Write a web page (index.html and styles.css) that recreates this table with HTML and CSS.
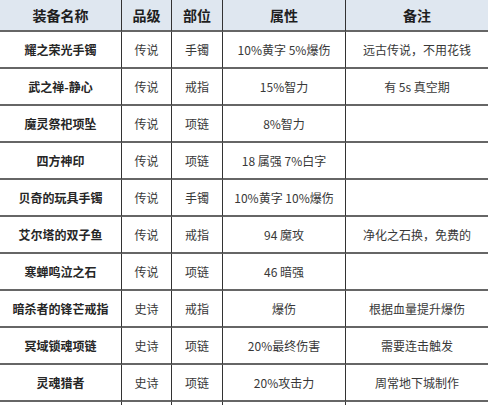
FILE: index.html
```html
<!DOCTYPE html>
<html lang="zh">
<head>
<meta charset="utf-8">
<link rel="stylesheet" href="styles.css">
</head>
<body>
<table class="gear">
  <colgroup>
    <col class="c-name"><col class="c-grade"><col class="c-slot"><col class="c-attr"><col class="c-note">
  </colgroup>
  <thead>
    <tr><th>装备名称</th><th>品级</th><th>部位</th><th>属性</th><th>备注</th></tr>
  </thead>
  <tbody>
    <tr><td class="name">耀之荣光手镯</td><td>传说</td><td>手镯</td><td>10%黄字 5%爆伤</td><td>远古传说，不用花钱</td></tr>
    <tr><td class="name">武之禅-静心</td><td>传说</td><td>戒指</td><td>15%智力</td><td>有 5s 真空期</td></tr>
    <tr><td class="name">魔灵祭祀项坠</td><td>传说</td><td>项链</td><td>8%智力</td><td></td></tr>
    <tr><td class="name">四方神印</td><td>传说</td><td>项链</td><td>18 属强 7%白字</td><td></td></tr>
    <tr><td class="name">贝奇的玩具手镯</td><td>传说</td><td>手镯</td><td>10%黄字 10%爆伤</td><td></td></tr>
    <tr><td class="name">艾尔塔的双子鱼</td><td>传说</td><td>戒指</td><td>94 魔攻</td><td>净化之石换，免费的</td></tr>
    <tr><td class="name">寒蝉鸣泣之石</td><td>传说</td><td>项链</td><td>46 暗强</td><td></td></tr>
    <tr><td class="name">暗杀者的锋芒戒指</td><td>史诗</td><td>戒指</td><td>爆伤</td><td>根据血量提升爆伤</td></tr>
    <tr><td class="name">冥域锁魂项链</td><td>史诗</td><td>项链</td><td>20%最终伤害</td><td>需要连击触发</td></tr>
    <tr><td class="name">灵魂猎者</td><td>史诗</td><td>项链</td><td>20%攻击力</td><td>周常地下城制作</td></tr>
    <tr class="next"><td></td><td></td><td></td><td></td><td></td></tr>
  </tbody>
</table>
</body>
</html>
```

FILE: styles.css
```css
html, body {
  margin: 0;
  padding: 0;
  background: #ffffff;
}
body {
  width: 488px;
  height: 405px;
  overflow: hidden;
  font-family: "Noto Sans CJK SC", "Noto Sans", sans-serif;
}
.gear {
  border-collapse: separate;
  border-spacing: 0;
  table-layout: fixed;
  width: 488px;
}
.c-name { width: 121px; }
.c-grade { width: 50px; }
.c-slot { width: 51px; }
.c-attr { width: 123px; }
.c-note { width: 143px; }

.gear th,
.gear td {
  box-sizing: content-box;
  padding: 0;
  text-align: center;
  vertical-align: middle;
  border-left: 1px solid #333333;
  border-bottom: 2px solid #666666;
  white-space: nowrap;
  overflow: hidden;
}
.gear th:first-child,
.gear td:first-child {
  border-left: none;
}
.gear th {
  height: 30px;
  background: #dfe7f0;
  font-size: 14px;
  font-weight: bold;
  color: #1e1e1e;
}
.gear td {
  height: 35px;
  font-size: 12px;
  color: #383838;
}
.gear td.name {
  font-weight: bold;
  color: #262626;
}
.gear tr.next td {
  height: 20px;
  border-bottom: none;
}
```
